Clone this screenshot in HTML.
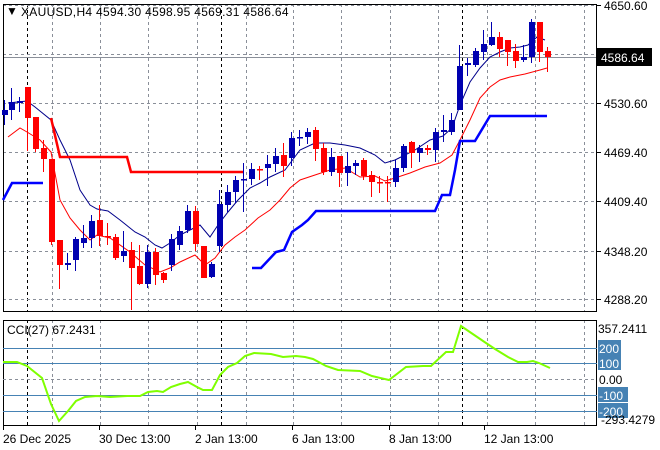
<!DOCTYPE html>
<html><head><meta charset="utf-8"><style>
html,body{margin:0;padding:0;background:#fff;width:660px;height:450px;overflow:hidden}
svg{display:block;font-family:"Liberation Sans",sans-serif;font-size:12px}
</style></head><body>
<svg id="s" width="660" height="450" xmlns="http://www.w3.org/2000/svg">
<rect width="660" height="450" fill="#fff"/>
<g id="grid"></g>
<g id="lines"></g>
<g id="candles"></g>
<text x="6" y="15" font-size="12">▼</text>
<text x="21" y="16" font-size="12" letter-spacing="0.3" fill="#000">XAUUSD,H4  4594.30 4598.95 4569.31 4586.64</text>
<text x="7" y="334" font-size="12">CCI(27) 67.2431</text>
</svg>
<script>
const NS="http://www.w3.org/2000/svg";
function el(p,t,a,txt){const e=document.createElementNS(NS,t);for(const k in a)e.setAttribute(k,a[k]);if(txt!==undefined)e.textContent=txt;document.getElementById(p).appendChild(e);return e;}
const gx=[52,100,148,197,246,293,341,390,438,487,535,584];
gx.forEach(x=>{el('grid','line',{x1:x+.5,y1:4,x2:x+.5,y2:311,stroke:'#8a8f99','stroke-dasharray':'3,3'});el('grid','line',{x1:x+.5,y1:320,x2:x+.5,y2:425,stroke:'#8a8f99','stroke-dasharray':'3,3'});});
[27,221,462].forEach(x=>{el('grid','line',{x1:x+.5,y1:4,x2:x+.5,y2:311,stroke:'#000','stroke-dasharray':'3,3'});el('grid','line',{x1:x+.5,y1:320,x2:x+.5,y2:425,stroke:'#000','stroke-dasharray':'3,3'});});
const hy=[[5,'4650.60'],[54,''],[103,'4530.60'],[152,'4469.40'],[201,'4409.40'],[251,'4348.20'],[299,'4288.20']];
hy.forEach(([y,t])=>{el('grid','line',{x1:3,y1:y+.5,x2:597,y2:y+.5,stroke:'#8a8f99','stroke-dasharray':'3,3'});el('grid','line',{x1:597,y1:y+.5,x2:601,y2:y+.5,stroke:'#000'});if(t)el('grid','text',{x:604,y:y+5},t);});
el('grid','line',{x1:3,y1:57.5,x2:597,y2:57.5,stroke:'#8a8f99'});
el('grid','rect',{x:597,y:48,width:55,height:18,fill:'#000'});
el('grid','text',{x:601,y:62,fill:'#fff'},'4586.64');
el('grid','rect',{x:3.5,y:4.5,width:593,height:307,fill:'none',stroke:'#000'});
el('grid','rect',{x:3.5,y:320.5,width:593,height:105,fill:'none',stroke:'#000'});
[[348,'200'],[363,'100'],[395,'-100'],[411,'-200']].forEach(([y,t])=>{el('grid','line',{x1:3,y1:y+.5,x2:597,y2:y+.5,stroke:'#4682b4'});el('grid','rect',{x:598,y:y-8,width:t.length*7+2,height:15,fill:'#4682b4'});el('grid','text',{x:599,y:y+5,fill:'#fff'},t);});
el('grid','line',{x1:3,y1:379.5,x2:597,y2:379.5,stroke:'#8a8f99','stroke-dasharray':'3,3'});
el('grid','text',{x:599,y:384},'0.00');
el('grid','text',{x:598,y:333},'357.2411');
el('grid','text',{x:601,y:424},'-293.4279');
[[3,'26 Dec 2025'],[99,'30 Dec 13:00'],[195,'2 Jan 13:00'],[292,'6 Jan 13:00'],[389,'8 Jan 13:00'],[484,'12 Jan 13:00']].forEach(([x,t])=>{el('grid','line',{x1:x+.5,y1:426,x2:x+.5,y2:430,stroke:'#000'});el('grid','text',{x:x,y:443},t);});
function pl(pts,c,w){el('lines','polyline',{points:pts.map(p=>p.join(',')).join(' '),fill:'none',stroke:c,'stroke-width':w});}
pl([[8,103],[27,101],[35,107],[51,120],[60,140],[70,160],[80,190],[90,205],[97,209],[108,211],[120,220],[135,232],[145,237],[155,245],[162,248],[170,243],[180,235],[190,230],[200,225],[210,237],[218,225],[228,212],[238,200],[250,188],[260,183],[270,177],[285,170],[300,150],[315,143],[330,143],[345,145],[360,148],[375,155],[385,163],[395,160],[405,155],[415,150],[430,140],[443,136],[452,128],[460,105],[470,82],[480,68],[490,57],[500,52],[510,48],[520,47],[528,45],[537,37],[545,40]],'#00008b',1);
pl([[8,137],[20,128],[27,132],[40,140],[51,152],[60,200],[70,218],[80,230],[90,240],[97,235],[110,238],[130,252],[145,265],[160,272],[170,268],[180,262],[195,255],[205,265],[215,258],[225,245],[235,237],[245,230],[258,218],[270,210],[280,200],[290,188],[300,180],[315,175],[330,170],[345,168],[360,177],[375,176],[385,181],[395,178],[410,173],[425,167],[440,163],[452,155],[460,140],[470,120],[480,98],[490,87],[500,80],[510,77],[525,74],[540,70],[547,68]],'#ff0000',1);
pl([[51,118],[60,157],[127,157],[131,172],[244,172]],'#ff0000',2.5);
pl([[3,200],[12,183],[43,183]],'#0000ff',2.5);
pl([[252,268],[261,268],[276,252],[284,250],[292,232],[302,225],[308,220],[316,211],[435,211],[442,195],[450,195],[455,170],[460,141],[475,141],[490,116],[547,116]],'#0000ff',2.5);
pl([[3,362],[17,362],[27,366],[42,378],[51,404],[59,421],[68,411],[76,401],[85,397],[97,396],[110,397],[127,396],[140,396],[148,392],[157,391],[163,392],[171,387],[180,384],[188,382],[197,387],[203,390],[212,390],[220,375],[228,367],[237,363],[245,356],[254,353],[271,354],[283,357],[296,356],[305,357],[313,359],[326,366],[338,370],[360,371],[372,376],[389,380],[406,367],[423,366],[431,366],[446,352],[453,352],[461,326],[486,343],[495,349],[508,357],[518,362],[527,362],[533,361],[539,363],[550,368]],'#7fff00',2);
const C=[[4,115,110,100,125],[11,110,102,88,120],[19,103,101,97,112],[27,87,118,87,151],[35,117,149,117,152],[43,148,159,140,172],[51,159,242,159,245],[59,240,265,240,289],[67,265,263,253,270],[75,260,239,237,271],[83,243,238,225,248],[91,238,221,215,248],[99,220,236,205,246],[107,236,237,223,245],[115,237,258,234,260],[123,256,251,231,262],[131,250,268,242,310],[139,266,284,245,285],[147,284,252,245,288],[155,252,275,248,285],[163,273,280,272,283],[171,265,239,234,271],[179,245,231,226,250],[187,230,211,205,233],[195,211,244,206,251],[203,246,278,246,278],[211,277,264,262,278],[219,246,204,190,252],[227,205,192,185,212],[235,192,180,176,203],[243,180,179,163,212],[251,179,169,163,185],[259,169,170,166,180],[267,168,164,155,186],[275,164,156,148,172],[283,155,166,143,177],[291,158,138,132,166],[299,138,137,130,146],[307,137,132,128,144],[315,130,149,127,161],[323,148,172,143,175],[331,172,157,148,176],[339,156,173,156,187],[347,173,166,152,186],[355,166,163,160,175],[363,160,176,158,180],[371,175,182,171,197],[379,182,183,176,193],[387,182,183,176,202],[395,182,168,160,187],[403,168,146,144,172],[411,142,153,141,168],[419,153,148,145,162],[427,148,150,145,155],[435,150,132,128,162],[443,132,130,115,142],[451,132,120,113,135],[459,110,66,45,110],[467,65,63,58,76],[475,65,51,48,67],[483,52,44,30,60],[491,45,37,22,46],[499,37,49,32,57],[507,40,52,40,66],[515,51,61,44,68],[523,60,57,45,62],[531,57,22,19,63],[539,22,52,22,62],[547,51,57,47,72]];
C.forEach(([x,o,c,h,l])=>{const bull=c<o;const col=bull?'#0000b0':'#ff0000';
el('candles','line',{x1:x+.5,y1:h,x2:x+.5,y2:l,stroke:col,'stroke-width':1});
const t=Math.min(o,c),b=Math.max(o,c);el('candles','rect',{x:x-2,y:t,width:6,height:Math.max(b-t,1.5),fill:col});});
</script>
</body></html>
